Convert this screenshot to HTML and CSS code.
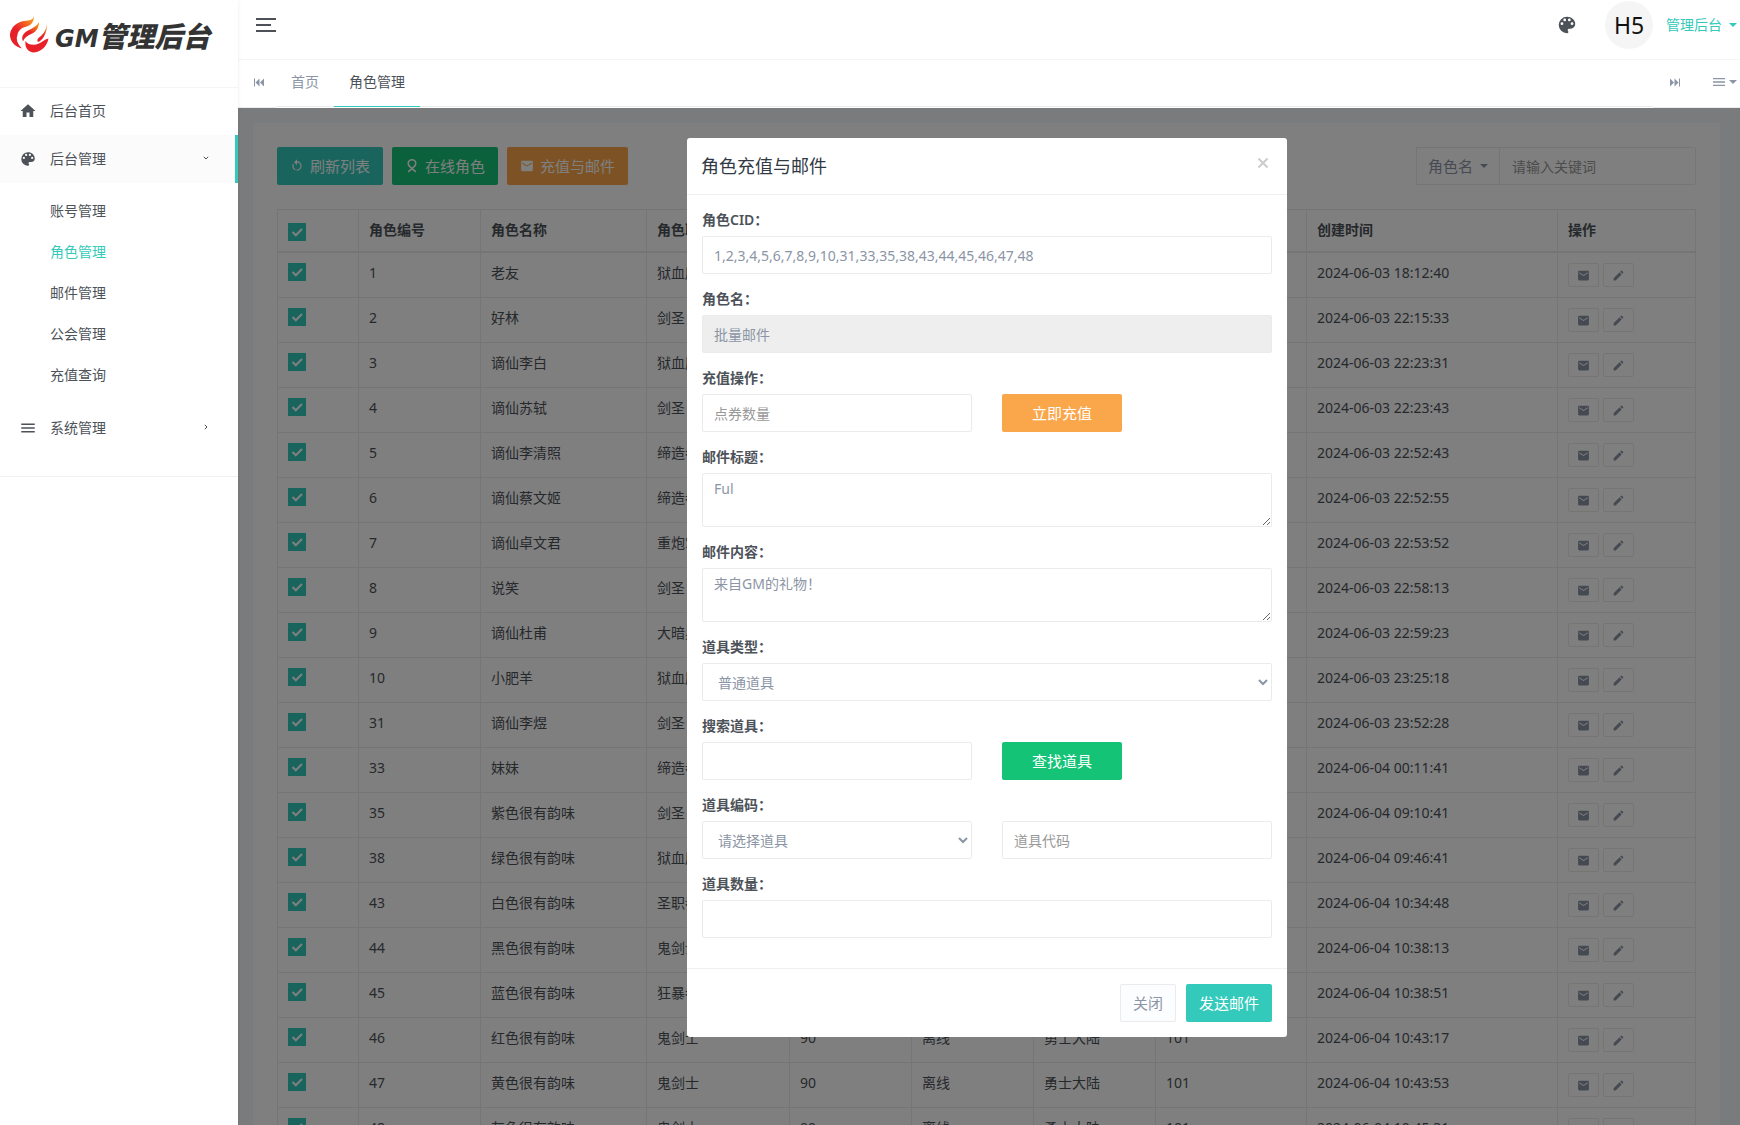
FILE: index.html
```html
<!DOCTYPE html>
<html lang="zh-CN">
<head>
<meta charset="utf-8">
<title>GM管理后台</title>
<link rel="stylesheet" href="styles.css">
</head>
<body>
<svg class="sprite" aria-hidden="true">
  <symbol id="home" viewBox="0 0 24 24"><path d="M10,20V14H14V20H19V12H22L12,3L2,12H5V20H10Z"/></symbol>
  <symbol id="palette" viewBox="0 0 24 24"><path d="M17.5,12A1.5,1.5 0 0,1 16,10.5A1.5,1.5 0 0,1 17.5,9A1.5,1.5 0 0,1 19,10.5A1.5,1.5 0 0,1 17.5,12M14.5,8A1.5,1.5 0 0,1 13,6.5A1.5,1.5 0 0,1 14.5,5A1.5,1.5 0 0,1 16,6.5A1.5,1.5 0 0,1 14.5,8M9.5,8A1.5,1.5 0 0,1 8,6.5A1.5,1.5 0 0,1 9.5,5A1.5,1.5 0 0,1 11,6.5A1.5,1.5 0 0,1 9.5,8M6.5,12A1.5,1.5 0 0,1 5,10.5A1.5,1.5 0 0,1 6.5,9A1.5,1.5 0 0,1 8,10.5A1.5,1.5 0 0,1 6.5,12M12,3A9,9 0 0,0 3,12A9,9 0 0,0 12,21A1.5,1.5 0 0,0 13.5,19.5C13.5,19.11 13.35,18.76 13.11,18.5C12.88,18.23 12.73,17.88 12.73,17.5A1.5,1.5 0 0,1 14.23,16H16A5,5 0 0,0 21,11C21,6.58 16.97,3 12,3Z"/></symbol>
  <symbol id="menu" viewBox="0 0 24 24"><path d="M3,6H21V8H3V6M3,11H21V13H3V11M3,16H21V18H3V16Z"/></symbol>
  <symbol id="mail" viewBox="0 0 24 24"><path d="M20,8L12,13L4,8V6L12,11L20,6M20,3H4C2.890,3 2,3.890 2,5V19A2,2 0 0,0 4,21H20A2,2 0 0,0 22,19V5C22,3.890 21.100,3 20,3Z"/></symbol>
  <symbol id="pencil" viewBox="0 0 24 24"><path d="M20.71,7.04C21.1,6.65 21.1,6 20.71,5.63L18.37,3.29C18,2.9 17.35,2.9 16.96,3.29L15.12,5.12L18.87,8.87M3,17.25V21H6.75L17.81,9.93L14.06,6.18L3,17.25Z"/></symbol>
  <symbol id="restart" viewBox="0 0 24 24"><path d="M12,4C14.1,4 16.1,4.8 17.6,6.3C20.7,9.4 20.7,14.5 17.6,17.6C15.8,19.5 13.3,20.2 10.9,19.9L11.4,17.9C13.1,18.1 14.9,17.5 16.2,16.2C18.5,13.9 18.5,10.1 16.2,7.7C15.1,6.6 13.5,6 12,6V10.6L7,5.6L12,0.6V4M6.3,17.6C3.7,15 3.3,11 5.1,7.9L6.6,9.4C5.5,11.6 5.9,14.4 7.8,16.2C8.3,16.7 8.9,17.1 9.6,17.4L9,19.4C8,19 7.1,18.4 6.3,17.6Z"/></symbol>
  <symbol id="ribbon" viewBox="0 0 14 14"><path d="M3.2 12.8L8.6 8.2C10.2 7 10.8 5.800 10.800 4.600A3.800 3.800 0 0 0 3.200 4.600C3.200 5.800 3.800 7 5.400 8.200L10.800 12.800" fill="none" stroke="currentColor" stroke-width="1.600"/></symbol>
  <symbol id="skip-back" viewBox="0 0 10 10"><path d="M0 1h1v8H0zM5.500 1v8L1.500 5zM10 1v8L6 5z"/></symbol>
  <symbol id="skip-next" viewBox="0 0 10 10"><path d="M9 1h1v8H9zM0 1v8l4-4zM4.500 1v8l4-4z"/></symbol>
  <symbol id="chevron" viewBox="0 0 6 6"><path d="M.8 1.800L3 4l2.200-2.200" fill="none" stroke="currentColor"/></symbol>
</svg>

<div class="app">
  <aside class="sidebar">
    <a class="logo" href="#">
      <svg class="logo-mark" viewBox="0 0 39 37" aria-hidden="true">
        <defs><linearGradient id="flame" x1="0" y1="1" x2=".8" y2="0"><stop offset=".5" stop-color="#e8202a"/><stop offset="1" stop-color="#f7941d"/></linearGradient></defs>
        <path fill="url(#flame)" d="M24 0C23 4 20 4.500 14 5C7 6 1 11 0 18C-.5 25 5 31 12 32.500C8 29 5.500 24 7.500 19C8 15 11 12 15 11C20 10 24 7 24 0Z"/>
        <path fill="url(#flame)" d="M29 6C27 10 23 12 18 14.500C13 17 11 21 13 25.500C14 22 17 20 21 18C26 16 29 12 29 6Z"/>
        <path fill="url(#flame)" d="M37 8C36 13 35 16 31 20C28 22 26.500 24 28 26C33 24.500 37 17 37 8Z"/>
        <path fill="#e8202a" d="M15.500 25C18 29 24 30 29 27.500C33 25.500 35 23 38.500 22.500C37 31 30 36.500 23 36.500C18 36 14.500 31 15.500 25Z"/>
      </svg>
      <span class="logo-text"><span class="logo-latin">GM</span>管理后台</span>
    </a>
    <nav class="nav">
      <a class="nav-item" href="#"><svg class="nav-icon"><use href="#home"/></svg>后台首页</a>
      <a class="nav-item active" href="#"><svg class="nav-icon"><use href="#palette"/></svg>后台管理<svg class="nav-arrow"><use href="#chevron"/></svg></a>
      <div class="subnav">
        <a href="#">账号管理</a>
        <a class="current" href="#">角色管理</a>
        <a href="#">邮件管理</a>
        <a href="#">公会管理</a>
        <a href="#">充值查询</a>
      </div>
      <a class="nav-item" href="#"><svg class="nav-icon"><use href="#menu"/></svg>系统管理<svg class="nav-arrow closed"><use href="#chevron"/></svg></a>
    </nav>
  </aside>

  <div class="main">
    <header class="topbar">
      <button class="toggle" type="button" aria-label="切换菜单"><span></span><span></span><span></span></button>
      <div class="topbar-right">
        <button class="theme" type="button" aria-label="主题"><svg><use href="#palette"/></svg></button>
        <span class="avatar">H5</span>
        <a class="user" href="#">管理后台<span class="caret"></span></a>
      </div>
    </header>

    <div class="tabs">
      <button class="tabs-prev" type="button" aria-label="向左"><svg><use href="#skip-back"/></svg></button>
      <div class="tab-list">
        <a class="tab" href="#">首页</a>
        <a class="tab active" href="#">角色管理</a>
      </div>
      <div class="tabs-tools">
        <button type="button" aria-label="向右"><svg><use href="#skip-next"/></svg></button>
        <button class="tabs-menu" type="button" aria-label="标签操作"><svg><use href="#menu"/></svg><span class="caret"></span></button>
      </div>
    </div>

    <div class="content">
      <main class="card">
        <div class="toolbar">
          <button class="btn teal" type="button"><svg><use href="#restart"/></svg>刷新列表</button>
          <button class="btn green" type="button"><svg><use href="#ribbon"/></svg>在线角色</button>
          <button class="btn orange" type="button"><svg><use href="#mail"/></svg>充值与邮件</button>
          <div class="search">
            <button type="button">角色名<span class="caret"></span></button>
            <input type="text" aria-label="关键词" placeholder="请输入关键词">
          </div>
        </div>
        <table class="roles">
          <colgroup><col class="c-check"><col class="c-mid"><col class="c-name"><col class="c-job"><col class="c-mid"><col class="c-mid"><col class="c-mid"><col class="c-area"><col><col class="c-ops"></colgroup>
          <thead>
            <tr><th><input class="check" type="checkbox" checked aria-label="全选"></th><th>角色编号</th><th>角色名称</th><th>角色职业</th><th>等级</th><th>状态</th><th>位置</th><th>频道</th><th>创建时间</th><th>操作</th></tr>
          </thead>
          <tbody>
            <tr><td><input class="check" type="checkbox" checked aria-label="1"></td><td>1</td><td>老友</td><td>狱血魔神</td><td>90</td><td>离线</td><td>勇士大陆</td><td>101</td><td>2024-06-03 18:12:40</td><td class="ops"><button type="button" aria-label="邮件"><svg><use href="#mail"/></svg></button><button type="button" aria-label="编辑"><svg><use href="#pencil"/></svg></button></td></tr>
            <tr><td><input class="check" type="checkbox" checked aria-label="2"></td><td>2</td><td>好林</td><td>剑圣</td><td>90</td><td>离线</td><td>勇士大陆</td><td>101</td><td>2024-06-03 22:15:33</td><td class="ops"><button type="button" aria-label="邮件"><svg><use href="#mail"/></svg></button><button type="button" aria-label="编辑"><svg><use href="#pencil"/></svg></button></td></tr>
            <tr><td><input class="check" type="checkbox" checked aria-label="3"></td><td>3</td><td>谪仙李白</td><td>狱血魔神</td><td>90</td><td>离线</td><td>勇士大陆</td><td>101</td><td>2024-06-03 22:23:31</td><td class="ops"><button type="button" aria-label="邮件"><svg><use href="#mail"/></svg></button><button type="button" aria-label="编辑"><svg><use href="#pencil"/></svg></button></td></tr>
            <tr><td><input class="check" type="checkbox" checked aria-label="4"></td><td>4</td><td>谪仙苏轼</td><td>剑圣</td><td>90</td><td>离线</td><td>勇士大陆</td><td>101</td><td>2024-06-03 22:23:43</td><td class="ops"><button type="button" aria-label="邮件"><svg><use href="#mail"/></svg></button><button type="button" aria-label="编辑"><svg><use href="#pencil"/></svg></button></td></tr>
            <tr><td><input class="check" type="checkbox" checked aria-label="5"></td><td>5</td><td>谪仙李清照</td><td>缔造者</td><td>90</td><td>离线</td><td>勇士大陆</td><td>101</td><td>2024-06-03 22:52:43</td><td class="ops"><button type="button" aria-label="邮件"><svg><use href="#mail"/></svg></button><button type="button" aria-label="编辑"><svg><use href="#pencil"/></svg></button></td></tr>
            <tr><td><input class="check" type="checkbox" checked aria-label="6"></td><td>6</td><td>谪仙蔡文姬</td><td>缔造者</td><td>90</td><td>离线</td><td>勇士大陆</td><td>101</td><td>2024-06-03 22:52:55</td><td class="ops"><button type="button" aria-label="邮件"><svg><use href="#mail"/></svg></button><button type="button" aria-label="编辑"><svg><use href="#pencil"/></svg></button></td></tr>
            <tr><td><input class="check" type="checkbox" checked aria-label="7"></td><td>7</td><td>谪仙卓文君</td><td>重炮掌控者</td><td>90</td><td>离线</td><td>勇士大陆</td><td>101</td><td>2024-06-03 22:53:52</td><td class="ops"><button type="button" aria-label="邮件"><svg><use href="#mail"/></svg></button><button type="button" aria-label="编辑"><svg><use href="#pencil"/></svg></button></td></tr>
            <tr><td><input class="check" type="checkbox" checked aria-label="8"></td><td>8</td><td>说笑</td><td>剑圣</td><td>90</td><td>离线</td><td>勇士大陆</td><td>101</td><td>2024-06-03 22:58:13</td><td class="ops"><button type="button" aria-label="邮件"><svg><use href="#mail"/></svg></button><button type="button" aria-label="编辑"><svg><use href="#pencil"/></svg></button></td></tr>
            <tr><td><input class="check" type="checkbox" checked aria-label="9"></td><td>9</td><td>谪仙杜甫</td><td>大暗黑天</td><td>90</td><td>离线</td><td>勇士大陆</td><td>101</td><td>2024-06-03 22:59:23</td><td class="ops"><button type="button" aria-label="邮件"><svg><use href="#mail"/></svg></button><button type="button" aria-label="编辑"><svg><use href="#pencil"/></svg></button></td></tr>
            <tr><td><input class="check" type="checkbox" checked aria-label="10"></td><td>10</td><td>小肥羊</td><td>狱血魔神</td><td>90</td><td>离线</td><td>勇士大陆</td><td>101</td><td>2024-06-03 23:25:18</td><td class="ops"><button type="button" aria-label="邮件"><svg><use href="#mail"/></svg></button><button type="button" aria-label="编辑"><svg><use href="#pencil"/></svg></button></td></tr>
            <tr><td><input class="check" type="checkbox" checked aria-label="31"></td><td>31</td><td>谪仙李煜</td><td>剑圣</td><td>90</td><td>离线</td><td>勇士大陆</td><td>101</td><td>2024-06-03 23:52:28</td><td class="ops"><button type="button" aria-label="邮件"><svg><use href="#mail"/></svg></button><button type="button" aria-label="编辑"><svg><use href="#pencil"/></svg></button></td></tr>
            <tr><td><input class="check" type="checkbox" checked aria-label="33"></td><td>33</td><td>妹妹</td><td>缔造者</td><td>90</td><td>离线</td><td>勇士大陆</td><td>101</td><td>2024-06-04 00:11:41</td><td class="ops"><button type="button" aria-label="邮件"><svg><use href="#mail"/></svg></button><button type="button" aria-label="编辑"><svg><use href="#pencil"/></svg></button></td></tr>
            <tr><td><input class="check" type="checkbox" checked aria-label="35"></td><td>35</td><td>紫色很有韵味</td><td>剑圣</td><td>90</td><td>离线</td><td>勇士大陆</td><td>101</td><td>2024-06-04 09:10:41</td><td class="ops"><button type="button" aria-label="邮件"><svg><use href="#mail"/></svg></button><button type="button" aria-label="编辑"><svg><use href="#pencil"/></svg></button></td></tr>
            <tr><td><input class="check" type="checkbox" checked aria-label="38"></td><td>38</td><td>绿色很有韵味</td><td>狱血魔神</td><td>90</td><td>离线</td><td>勇士大陆</td><td>101</td><td>2024-06-04 09:46:41</td><td class="ops"><button type="button" aria-label="邮件"><svg><use href="#mail"/></svg></button><button type="button" aria-label="编辑"><svg><use href="#pencil"/></svg></button></td></tr>
            <tr><td><input class="check" type="checkbox" checked aria-label="43"></td><td>43</td><td>白色很有韵味</td><td>圣职者</td><td>90</td><td>离线</td><td>勇士大陆</td><td>101</td><td>2024-06-04 10:34:48</td><td class="ops"><button type="button" aria-label="邮件"><svg><use href="#mail"/></svg></button><button type="button" aria-label="编辑"><svg><use href="#pencil"/></svg></button></td></tr>
            <tr><td><input class="check" type="checkbox" checked aria-label="44"></td><td>44</td><td>黑色很有韵味</td><td>鬼剑士</td><td>90</td><td>离线</td><td>勇士大陆</td><td>101</td><td>2024-06-04 10:38:13</td><td class="ops"><button type="button" aria-label="邮件"><svg><use href="#mail"/></svg></button><button type="button" aria-label="编辑"><svg><use href="#pencil"/></svg></button></td></tr>
            <tr><td><input class="check" type="checkbox" checked aria-label="45"></td><td>45</td><td>蓝色很有韵味</td><td>狂暴者</td><td>90</td><td>离线</td><td>勇士大陆</td><td>101</td><td>2024-06-04 10:38:51</td><td class="ops"><button type="button" aria-label="邮件"><svg><use href="#mail"/></svg></button><button type="button" aria-label="编辑"><svg><use href="#pencil"/></svg></button></td></tr>
            <tr><td><input class="check" type="checkbox" checked aria-label="46"></td><td>46</td><td>红色很有韵味</td><td>鬼剑士</td><td>90</td><td>离线</td><td>勇士大陆</td><td>101</td><td>2024-06-04 10:43:17</td><td class="ops"><button type="button" aria-label="邮件"><svg><use href="#mail"/></svg></button><button type="button" aria-label="编辑"><svg><use href="#pencil"/></svg></button></td></tr>
            <tr><td><input class="check" type="checkbox" checked aria-label="47"></td><td>47</td><td>黄色很有韵味</td><td>鬼剑士</td><td>90</td><td>离线</td><td>勇士大陆</td><td>101</td><td>2024-06-04 10:43:53</td><td class="ops"><button type="button" aria-label="邮件"><svg><use href="#mail"/></svg></button><button type="button" aria-label="编辑"><svg><use href="#pencil"/></svg></button></td></tr>
            <tr><td><input class="check" type="checkbox" checked aria-label="48"></td><td>48</td><td>灰色很有韵味</td><td>鬼剑士</td><td>90</td><td>离线</td><td>勇士大陆</td><td>101</td><td>2024-06-04 10:45:31</td><td class="ops"><button type="button" aria-label="邮件"><svg><use href="#mail"/></svg></button><button type="button" aria-label="编辑"><svg><use href="#pencil"/></svg></button></td></tr>
          </tbody>
        </table>
      </main>

      <div class="overlay">
        <section class="modal" role="dialog" aria-labelledby="modal-title">
          <header class="modal-head">
            <h4 id="modal-title">角色充值与邮件</h4>
            <button class="close" type="button" aria-label="关闭"><svg viewBox="0 0 10 10"><path d="M.5.5l9 9M9.500.5l-9 9"/></svg></button>
          </header>
          <form class="modal-body">
            <div class="field"><label for="cid">角色CID：</label><input id="cid" type="text" value="1,2,3,4,5,6,7,8,9,10,31,33,35,38,43,44,45,46,47,48"></div>
            <div class="field"><label for="rname">角色名：</label><input id="rname" type="text" value="批量邮件" readonly></div>
            <div class="field"><label for="coins">充值操作：</label><div class="pair"><input id="coins" type="text" placeholder="点券数量"><button class="btn orange wide" type="button">立即充值</button></div></div>
            <div class="field"><label for="subject">邮件标题：</label><textarea id="subject">Ful</textarea></div>
            <div class="field"><label for="message">邮件内容：</label><textarea id="message">来自GM的礼物！</textarea></div>
            <div class="field"><label for="kind">道具类型：</label><select id="kind"><option>普通道具</option></select></div>
            <div class="field"><label for="find">搜索道具：</label><div class="pair"><input id="find" type="text"><button class="btn green wide" type="button">查找道具</button></div></div>
            <div class="field"><label for="item">道具编码：</label><div class="pair"><select id="item"><option>请选择道具</option></select><input type="text" aria-label="道具代码" placeholder="道具代码"></div></div>
            <div class="field"><label for="count">道具数量：</label><input id="count" type="text"></div>
          </form>
          <footer class="modal-foot">
            <button class="btn plain" type="button">关闭</button>
            <button class="btn teal" type="button">发送邮件</button>
          </footer>
        </section>
      </div>
    </div>
  </div>
</div>
</body>
</html>
```
FILE: styles.css
```css
* { box-sizing: border-box; }

body {
  margin: 0;
  color: #4d5259;
  background: #f5f6fa;
  font: 14px/20px "Noto Sans", "Noto Sans CJK SC", sans-serif;
}

a { color: inherit; text-decoration: none; }
svg { fill: currentColor; flex: none; }
.sprite { position: absolute; width: 0; height: 0; }

button, input, select, textarea { font: inherit; color: inherit; }
button {
  display: flex;
  align-items: center;
  justify-content: center;
  padding: 0;
  border: 0;
  background: none;
  cursor: pointer;
}

.app { display: flex; height: 100vh; overflow: hidden; }

.caret {
  width: 8px;
  height: 4px;
  background: currentColor;
  clip-path: polygon(0 0, 100% 0, 50% 100%);
}

/* Sidebar */
.sidebar {
  flex: none;
  width: 238px;
  background: #fff;
  box-shadow: 0 0 4px rgba(0, 0, 0, .08);
  z-index: 2;
}
.logo {
  display: flex;
  align-items: center;
  gap: 6px;
  height: 87px;
  padding: 0 0 18px 10px;
}
.logo-mark { width: 39px; height: 37px; }
.logo-text {
  color: #333;
  font: italic 900 28px/40px "Noto Sans CJK SC", sans-serif;
}
.logo-latin { font: italic 700 24px/24px "DejaVu Sans", sans-serif; }
.nav {
  padding-bottom: 24px;
  border-bottom: 1px solid #f0f0f0;
  box-shadow: inset 0 1px #f5f5f5;
}
.nav-item {
  display: flex;
  align-items: center;
  height: 48px;
  padding: 0 29px 0 19px;
}
.nav-item.active {
  background: #fbfbfb;
  box-shadow: inset -3px 0 #33cabb;
}
.nav-icon { width: 18px; height: 18px; margin-right: 13px; }
.nav-arrow { width: 6px; height: 6px; margin: 0 0 2px auto; }
.nav-arrow.closed { transform: rotate(-90deg); }
.subnav { padding: 8px 0; }
.subnav a { display: block; padding: 10px 0 11px 50px; }
.subnav .current { color: #33cabb; }

/* Top bar and tabs */
.main { flex: 1; min-width: 0; display: flex; flex-direction: column; }
.topbar {
  display: flex;
  align-items: center;
  justify-content: space-between;
  height: 60px;
  padding: 0 3px 9px 18px;
  background: #fff;
  border-bottom: 1px solid #f5f5f5;
}
.toggle { flex-direction: column; align-items: flex-start; gap: 4px; }
.toggle span { width: 20px; height: 2px; background: #4d5259; }
.toggle span:nth-child(2) { width: 15px; }
.topbar-right { display: flex; align-items: center; }
.theme { margin-right: 27px; }
.theme svg { width: 22px; height: 22px; }
.avatar {
  width: 48px;
  height: 48px;
  margin-right: 13px;
  border-radius: 50%;
  background: #f5f5f5;
  color: #111;
  font-size: 23px;
  line-height: 48px;
  text-align: center;
}
.user { display: flex; align-items: center; gap: 7px; color: #33cabb; }

.tabs { display: flex; height: 48px; background: #fff; color: #8b95a5; }
.tabs svg { width: 10px; height: 11px; }
.tabs-prev { width: 38px; padding: 0 0 3px 4px; border-bottom: 1px solid #ebebeb; }
.tab-list {
  flex: 1;
  display: flex;
  height: 47px;
  border-bottom: 1px solid #ebebeb;
}
.tab { height: 47px; padding: 12px 15px 14px; }
.tab.active { color: #4d5259; border-bottom: 1px solid #33cabb; }
.tabs-tools {
  display: flex;
  align-items: center;
  gap: 31px;
  width: 87px;
  padding: 0 3px 3px 17px;
  border-bottom: 1px solid #ebebeb;
}
.tabs .tabs-menu { gap: 2px; }
.tabs .tabs-menu svg { width: 16px; height: 16px; }

/* Page content */
.content { position: relative; flex: 1; min-height: 0; overflow: hidden; }
.card {
  margin: 15px 20px 15px 15px;
  padding: 24px;
  background: #fff;
  border-radius: 2px;
}
.toolbar { display: flex; gap: 9px; margin-bottom: 24px; }
.btn {
  height: 38px;
  padding: 0 13px;
  border-radius: 2px;
  color: #fff;
  font-size: 15px;
  gap: 6px;
}
.btn svg { width: 14px; height: 14px; }
.teal { background: #33cabb; }
.green { background: #15c377; }
.orange { background: #faa64b; }
.plain { padding: 0 12px; background: #fcfdfe; border: 1px solid #ebebeb; color: #8b95a5; }
.wide { width: 120px; }

.search { display: flex; margin-left: auto; width: 280px; color: #8b95a5; }
.search button {
  width: 84px;
  gap: 7px;
  border: 1px solid #ebebeb;
  font-size: 15px;
}
.search input {
  flex: 1;
  min-width: 0;
  height: 38px;
  padding: 0 12px;
  border: 1px solid #ebebeb;
  border-left: 0;
  border-radius: 0 2px 2px 0;
  background: #fff;
}
::placeholder { color: #999; }

.roles {
  width: 100%;
  table-layout: fixed;
  border-collapse: separate;
  border-spacing: 0;
  border-top: 1px solid #ebebeb;
  border-left: 1px solid #ebebeb;
}
.c-check { width: 81px; }
.c-mid { width: 122px; }
.c-name { width: 166px; }
.c-job { width: 143px; }
.c-area { width: 151px; }
.c-ops { width: 138px; }
.roles th, .roles td {
  padding: 10px;
  border-right: 1px solid #ebebeb;
  border-bottom: 1px solid #ebebeb;
  text-align: left;
  vertical-align: top;
  white-space: nowrap;
}
.roles th { height: 43px; border-bottom-width: 2px; font-weight: 600; }
.roles td { height: 45px; }
.check {
  display: block;
  appearance: none;
  width: 18px;
  height: 18px;
  margin: 0;
  background: #33cabb url("data:image/svg+xml,%3Csvg xmlns='http://www.w3.org/2000/svg' viewBox='0 0 18 18'%3E%3Cpath d='M4.500 9l3.300 3.300L14 6' fill='none' stroke='%23fff' stroke-width='2'/%3E%3C/svg%3E");
}
th .check { margin-top: 3px; }
.ops button {
  display: inline-flex;
  width: 31px;
  height: 24px;
  margin-right: 4px;
  border: 1px solid #ebebeb;
  border-radius: 2px;
  color: #8b95a5;
  vertical-align: top;
}
.ops svg { width: 13px; height: 13px; }

/* Dialog */
.overlay {
  position: absolute;
  inset: 0;
  padding: 30px 4px 0 0;
  background: rgba(0, 0, 0, .5);
}
.modal {
  width: 600px;
  max-width: 100%;
  margin: 0 auto;
  background: #fff;
  border-radius: 3px;
}
.modal-head {
  display: flex;
  justify-content: space-between;
  align-items: flex-start;
  padding: 15px 19px 15px 14px;
  border-bottom: 1px solid #f0f0f0;
}
.modal-head h4 {
  margin: 0;
  color: #313944;
  font-size: 18px;
  font-weight: 400;
  line-height: 26px;
}
.close svg { width: 10px; height: 10px; margin-top: 5px; stroke: #ccc; stroke-width: 2px; }
.modal-body { padding: 15px; }
.field { padding-bottom: 15px; }
.field label { display: block; margin-bottom: 6px; font-weight: 600; }
.field input, .field select, .field textarea {
  display: block;
  width: 100%;
  height: 38px;
  margin: 0;
  padding: 5px 11px;
  border: 1px solid #ebebeb;
  border-radius: 2px;
  background: #fff;
  color: #8b95a5;
}
.field textarea { height: 54px; }
.field input[readonly] { background: #eee; }
.pair { display: grid; grid-template-columns: 1fr 1fr; gap: 30px; }
.modal-foot {
  display: flex;
  justify-content: flex-end;
  gap: 10px;
  padding: 15px;
  border-top: 1px solid #f0f0f0;
}
```
